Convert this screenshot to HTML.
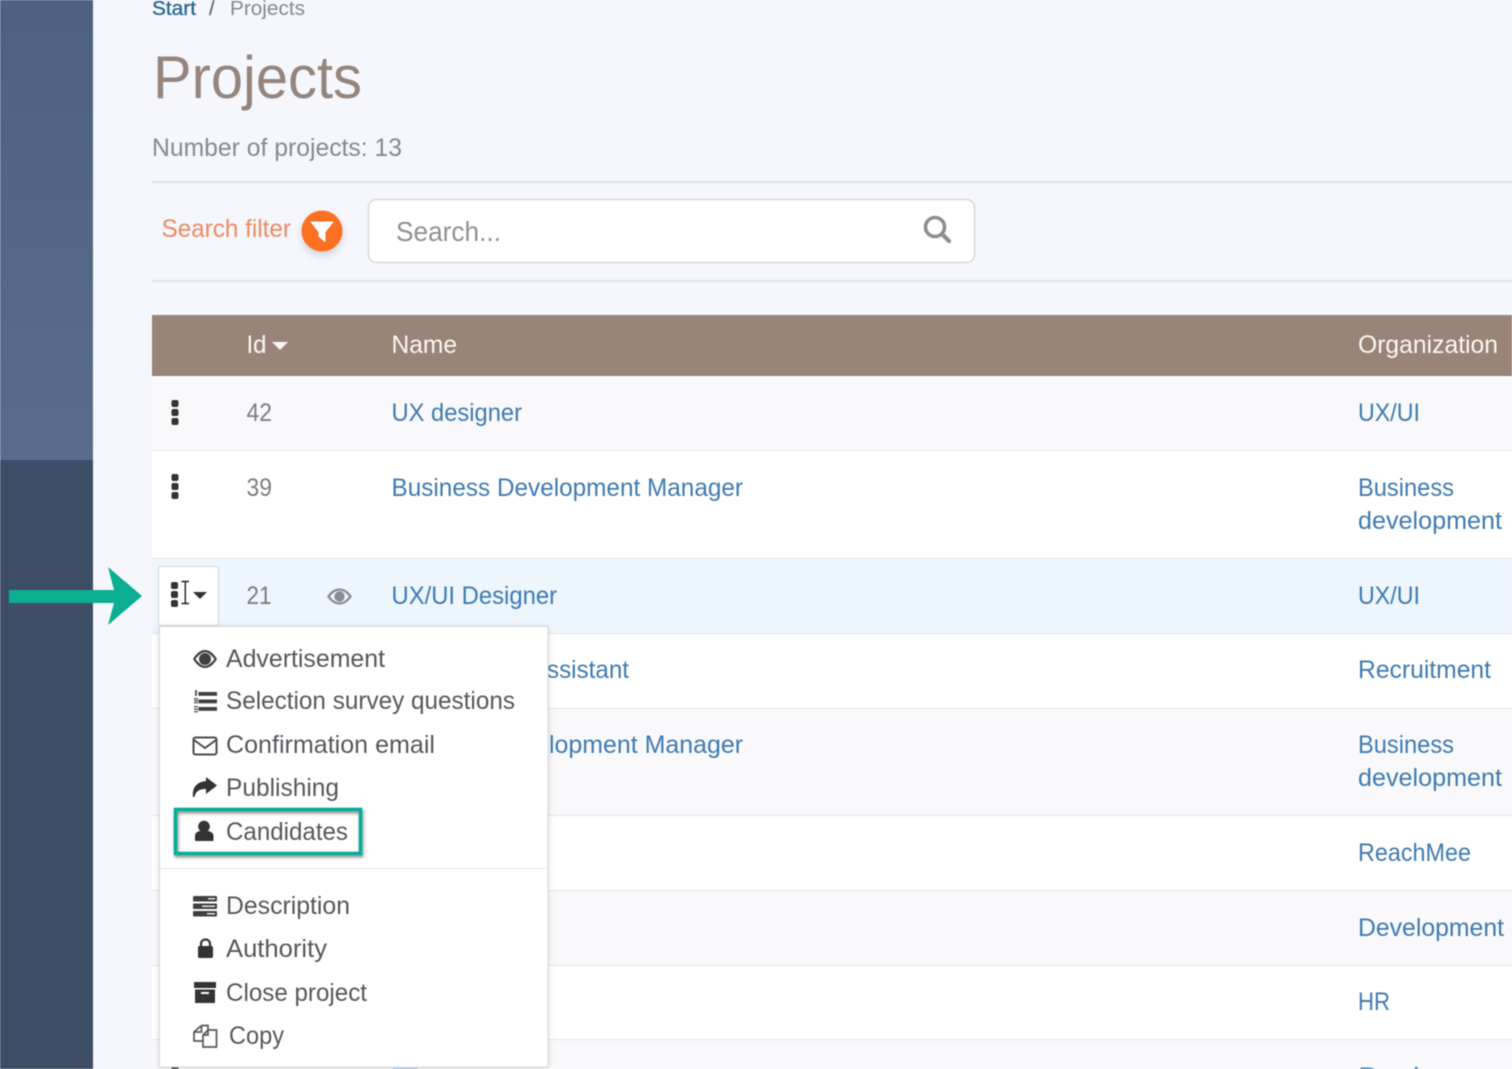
<!DOCTYPE html>
<html lang="en">
<head>
<meta charset="utf-8">
<title>Projects</title>
<style>
html,body{margin:0;padding:0;width:1512px;height:1069px;overflow:hidden;background:#f5f7fd}
svg{display:block;filter:blur(.45px)}
text{font-family:"Liberation Sans",Arial,sans-serif;font-size:25px;fill:#7b7d80}
.l{fill:#3f7bb0}
.m{fill:#55585c}
.h{fill:#fbf8f4}
</style>
</head>
<body>
<svg width="1512" height="1069" viewBox="0 0 1512 1069" xmlns="http://www.w3.org/2000/svg">
<defs>
<linearGradient id="side" x1="0" y1="0" x2="0" y2="1"><stop offset="0" stop-color="#4f6180"/><stop offset="1" stop-color="#5a6c8c"/></linearGradient>
<filter id="sh" x="-10%" y="-10%" width="120%" height="120%"><feDropShadow dx="0" dy="1" stdDeviation="3" flood-color="#000" flood-opacity=".14"/></filter>
<filter id="sh2" x="-20%" y="-20%" width="140%" height="150%"><feDropShadow dx="1" dy="2" stdDeviation="1.5" flood-color="#000" flood-opacity=".5"/></filter>
<filter id="sh3" x="-40%" y="-40%" width="180%" height="180%"><feDropShadow dx="0" dy="4" stdDeviation="4" flood-color="#000" flood-opacity=".14"/></filter>
</defs>

<!-- sidebar -->
<rect x="0" y="0" width="93" height="460" fill="url(#side)"/>
<rect x="0" y="460" width="93" height="609" fill="#3d4d68"/>

<!-- breadcrumb -->
<text x="152" y="15" style="font-size:20px;fill:#2f6690;stroke:#2f6690;stroke-width:.35" textLength="44" lengthAdjust="spacingAndGlyphs">Start</text>
<text x="209" y="15" style="font-size:20px;fill:#5f6b78;stroke:#5f6b78;stroke-width:.3">/</text>
<text x="230" y="15" style="font-size:20px;fill:#858a90" textLength="75" lengthAdjust="spacingAndGlyphs">Projects</text>

<!-- title -->
<text x="153" y="98" style="font-size:60px;fill:#96857c" textLength="209" lengthAdjust="spacingAndGlyphs">Projects</text>
<text x="152" y="156" style="font-size:25px;fill:#858a90" textLength="250" lengthAdjust="spacingAndGlyphs">Number of projects: 13</text>
<rect x="152" y="181" width="1360" height="2" fill="#dfe1e6"/>

<!-- filter -->
<text x="161.500" y="237" style="font-size:25px;fill:#ee8a62" textLength="129.500" lengthAdjust="spacingAndGlyphs">Search filter</text>
<circle cx="322" cy="231" r="20.500" fill="#fb6f21" filter="url(#sh3)"/>
<path d="M311 222H333L325 232V241.500L319 236.500V232Z" fill="#fff" stroke="#fff" stroke-width="1" stroke-linejoin="round"/>
<rect x="368.500" y="199.500" width="606" height="63" rx="8" fill="#fff" stroke="#d6d8dd" stroke-width="1.500"/>
<text x="396" y="241" style="font-size:28px;fill:#8e9194" textLength="105" lengthAdjust="spacingAndGlyphs">Search...</text>
<circle cx="935" cy="227" r="9.500" fill="none" stroke="#8b8d90" stroke-width="3.600"/>
<path d="M942 234L949 241" stroke="#8b8d90" stroke-width="4.200" stroke-linecap="round"/>
<rect x="152" y="280" width="1360" height="2" fill="#e3e5ea"/>

<!-- table head -->
<rect x="152" y="315" width="1360" height="61" fill="#998477"/>
<text x="246.500" y="353" class="h" textLength="20" lengthAdjust="spacingAndGlyphs">Id</text>
<path d="M272 342H288L280 350Z" fill="#fbf8f4"/>
<text x="391.500" y="353" class="h" textLength="65.500" lengthAdjust="spacingAndGlyphs">Name</text>
<text x="1358" y="353" class="h" textLength="140" lengthAdjust="spacingAndGlyphs">Organization</text>

<!-- rows -->
<rect x="152" y="376" width="1360" height="74" fill="#f9f9fb"/>
<rect x="152" y="451" width="1360" height="107" fill="#fff"/>
<rect x="152" y="559" width="1360" height="74" fill="#edf5fd"/>
<rect x="152" y="634" width="1360" height="74" fill="#fff"/>
<rect x="152" y="709" width="1360" height="106" fill="#f9f9fb"/>
<rect x="152" y="816" width="1360" height="74" fill="#fff"/>
<rect x="152" y="891" width="1360" height="74" fill="#f9f9fb"/>
<rect x="152" y="966" width="1360" height="73" fill="#fff"/>
<rect x="152" y="1040" width="1360" height="29" fill="#f9f9fb"/>
<g fill="#e4e6ea">
<rect x="152" y="450" width="1360" height="1"/><rect x="152" y="558" width="1360" height="1"/>
<rect x="152" y="633" width="1360" height="1"/><rect x="152" y="708" width="1360" height="1"/>
<rect x="152" y="815" width="1360" height="1"/><rect x="152" y="890" width="1360" height="1"/>
<rect x="152" y="965" width="1360" height="1"/><rect x="152" y="1039" width="1360" height="1"/>
</g>

<g fill="#333">
<rect x="171.500" y="400" width="7" height="7" rx="2"/><rect x="171.500" y="409" width="7" height="7" rx="2"/><rect x="171.500" y="418" width="7" height="7" rx="2"/>
<rect x="171.500" y="474" width="7" height="7" rx="2"/><rect x="171.500" y="483" width="7" height="7" rx="2"/><rect x="171.500" y="492" width="7" height="7" rx="2"/>
<rect x="171.500" y="1066" width="7" height="7" rx="2"/>
</g>

<text x="246.500" y="421" textLength="25.500" lengthAdjust="spacingAndGlyphs">42</text>
<text x="391.500" y="421" class="l" textLength="130.500" lengthAdjust="spacingAndGlyphs">UX designer</text>
<text x="1358" y="421" class="l" textLength="62" lengthAdjust="spacingAndGlyphs">UX/UI</text>

<text x="246.500" y="496" textLength="25.500" lengthAdjust="spacingAndGlyphs">39</text>
<text x="391.500" y="496" class="l" textLength="351.500" lengthAdjust="spacingAndGlyphs">Business Development Manager</text>
<text x="1358" y="496" class="l" textLength="96" lengthAdjust="spacingAndGlyphs">Business</text>
<text x="1358" y="529" class="l" textLength="144" lengthAdjust="spacingAndGlyphs">development</text>

<text x="246.500" y="604" textLength="25" lengthAdjust="spacingAndGlyphs">21</text>
<path d="M327 596.500C331 590.500 335 588.500 339.500 588.500S348 590.500 352 596.500C348 602 344 604.500 339.500 604.500S331 602 327 596.500ZM330 596.500C333 600.500 336 602.300 339.500 602.300S346 600.500 349 596.500C346 592.500 343 590.700 339.500 590.700S333 592.500 330 596.500Z" fill="#8a8d90"/>
<circle cx="339.500" cy="596.500" r="5.200" fill="#8a8d90"/>
<text x="391.500" y="604" class="l" textLength="165.500" lengthAdjust="spacingAndGlyphs">UX/UI Designer</text>
<text x="1358" y="604" class="l" textLength="62" lengthAdjust="spacingAndGlyphs">UX/UI</text>

<text x="547" y="678" class="l" textLength="82" lengthAdjust="spacingAndGlyphs">ssistant</text>
<text x="1358" y="678" class="l" textLength="133" lengthAdjust="spacingAndGlyphs">Recruitment</text>

<text x="549" y="753" class="l" textLength="194" lengthAdjust="spacingAndGlyphs">lopment Manager</text>
<text x="1358" y="753" class="l" textLength="96" lengthAdjust="spacingAndGlyphs">Business</text>
<text x="1358" y="786" class="l" textLength="144" lengthAdjust="spacingAndGlyphs">development</text>

<text x="1358" y="861" class="l" textLength="113" lengthAdjust="spacingAndGlyphs">ReachMee</text>
<text x="1358" y="936" class="l" textLength="146" lengthAdjust="spacingAndGlyphs">Development</text>
<text x="1358" y="1010" class="l" textLength="32" lengthAdjust="spacingAndGlyphs">HR</text>
<text x="1358" y="1085" class="l" textLength="96" lengthAdjust="spacingAndGlyphs">Design</text>
<text x="392" y="1086" class="l" textLength="120" lengthAdjust="spacingAndGlyphs">Tester</text>

<!-- arrow -->
<path d="M9 590H114L108 567L142 596L108 625L114 603H9Z" fill="#0bae91"/>

<!-- button -->
<rect x="158.500" y="566.500" width="60" height="59" rx="2" fill="#fff" stroke="#d3d5da"/>
<g fill="#333">
<rect x="171" y="582" width="7" height="7" rx="2"/><rect x="171" y="591" width="7" height="7" rx="2"/><rect x="171" y="600" width="7" height="7" rx="2"/>
</g>
<path d="M193 592H207L200 599Z" fill="#333"/>
<path d="M181.500 581.500H189M181.500 603.500H189M185.300 581.500V603.500" stroke="#222" stroke-width="1.400" fill="none"/>

<!-- menu -->
<rect x="159.500" y="626.500" width="388.500" height="440.500" fill="#fff" stroke="#d6d8dc" filter="url(#sh)"/>
<rect x="160" y="868" width="388" height="1" fill="#e9e9ec"/>

<!-- menu icons -->
<g>
<path d="M193 659C197 652.500 201 650 205 650S213 652.500 217 659C213 665.500 209 668 205 668S197 665.500 193 659ZM195.500 659C199 663.500 202 665.800 205 665.800S211 663.500 214.500 659C211 654.500 208 652.200 205 652.200S199 654.500 195.500 659Z" fill="#3f3f42"/>
<circle cx="205" cy="659" r="6" fill="#3f3f42"/>
</g>
<g fill="#3f3f42">
<rect x="198.500" y="692" width="18.500" height="3.800"/><rect x="198.500" y="699.500" width="18.500" height="3.800"/><rect x="198.500" y="707" width="18.500" height="3.800"/>
</g>
<g fill="#5a5c60"><rect x="195" y="690" width="2" height="6"/><rect x="194" y="698" width="4" height="1.400"/><rect x="194" y="700" width="4" height="1.400"/><rect x="194" y="702" width="4" height="1.400"/><rect x="194" y="706" width="4" height="1.400"/><rect x="194" y="708.500" width="4" height="1.400"/><rect x="194" y="711" width="4" height="1.400"/></g>
<rect x="193.500" y="737.500" width="23" height="17" rx="2" fill="none" stroke="#4a4c50" stroke-width="2"/>
<path d="M194 740L205 748L216 740" fill="none" stroke="#4a4c50" stroke-width="2"/>
<path d="M193 797C192 787 197 782 206 781V777L217 785.500L206 794V789C201 789 196 790 194.500 797Z" fill="#333336"/>
<circle cx="204" cy="826.500" r="5.800" fill="#333336"/>
<path d="M195 841V836C195 832.500 198 831 201 831H207C210 831 213.500 832.500 213.500 836V841Z" fill="#333336"/>
<g fill="#3f3f42">
<rect x="193" y="896" width="24" height="5.500" rx="1"/><rect x="193" y="903.500" width="24" height="5.500" rx="1"/><rect x="193" y="911" width="24" height="5.500" rx="1"/>
</g>
<g fill="#e4e4e6"><rect x="208" y="898" width="7" height="1.500"/><rect x="202" y="905.500" width="13" height="1.500"/><rect x="207" y="913" width="8" height="1.500"/></g>
<rect x="198" y="946" width="15" height="12" rx="1.500" fill="#333336"/>
<path d="M201 947V944C201 941 203 939.500 205.500 939.500S210 941 210 944V947" fill="none" stroke="#333336" stroke-width="2.200"/>
<rect x="194" y="982" width="22" height="6" fill="#333336"/>
<path d="M195 989.500H215V1003H195ZM201 992V994H209V992Z" fill="#333336" fill-rule="evenodd"/>
<path d="M201.500 1025.500L194 1032V1041H203M201.500 1025.500H208V1030M194 1032H201.500V1025.500" fill="none" stroke="#55585c" stroke-width="1.700"/>
<path d="M208 1030L203 1035V1047H216.500V1030ZM203 1035H208V1030" fill="none" stroke="#55585c" stroke-width="1.700"/>

<!-- menu text -->
<text x="226" y="667" class="m" textLength="159" lengthAdjust="spacingAndGlyphs">Advertisement</text>
<text x="226" y="709" class="m" textLength="289" lengthAdjust="spacingAndGlyphs">Selection survey questions</text>
<text x="226" y="753" class="m" textLength="209" lengthAdjust="spacingAndGlyphs">Confirmation email</text>
<text x="226" y="796" class="m" textLength="113" lengthAdjust="spacingAndGlyphs">Publishing</text>
<text x="226" y="840" class="m" textLength="122" lengthAdjust="spacingAndGlyphs">Candidates</text>
<text x="226" y="914" class="m" textLength="124" lengthAdjust="spacingAndGlyphs">Description</text>
<text x="226" y="957" class="m" textLength="101" lengthAdjust="spacingAndGlyphs">Authority</text>
<text x="226" y="1001" class="m" textLength="141" lengthAdjust="spacingAndGlyphs">Close project</text>
<text x="229" y="1044" class="m" textLength="55" lengthAdjust="spacingAndGlyphs">Copy</text>

<!-- highlight box -->
<rect x="175.500" y="809.500" width="185" height="44" fill="none" stroke="#06ad97" stroke-width="3.500" filter="url(#sh2)"/>
</svg>
</body>
</html>
